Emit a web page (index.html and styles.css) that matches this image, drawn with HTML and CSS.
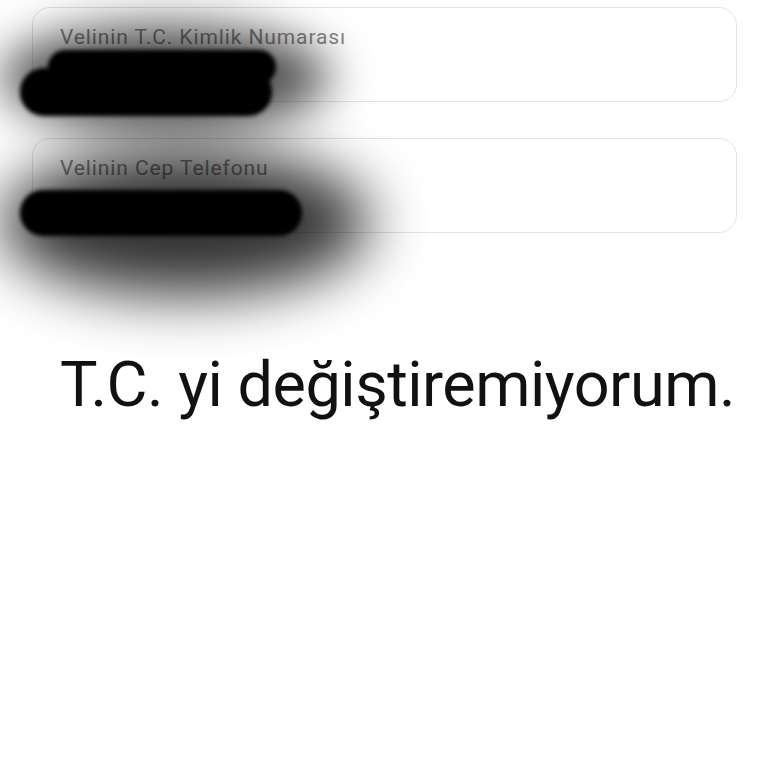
FILE: index.html
```html
<!DOCTYPE html>
<html lang="tr">
<head>
<meta charset="utf-8">
<link rel="stylesheet" href="styles.css">
</head>
<body>
<div class="page">
  <div class="form">
    <div class="field"><span class="label">Velinin T.C. Kimlik Numarası</span></div>
    <div class="field"><span class="label">Velinin Cep Telefonu</span></div>
  </div>
  <p class="message">T.C. yi değiştiremiyorum.</p>
  <div class="scribble s1-halo"></div>
  <div class="scribble s1-a"></div>
  <div class="scribble s1-b"></div>
  <div class="scribble s2-halo"></div>
  <div class="scribble s2-a"></div>
</div>
</body>
</html>
```

FILE: styles.css
```css
html, body {
  margin: 0;
  padding: 0;
  background: #ffffff;
}
.page {
  position: relative;
  width: 768px;
  height: 768px;
  overflow: hidden;
  font-family: Roboto, "Liberation Sans", sans-serif;
}
.form {
  display: flex;
  flex-direction: column;
  gap: 36px;
  padding: 7px 31px 0 32px;
}
.field {
  height: 95px;
  border: 1.5px solid #e4e4e4;
  border-radius: 18px;
  padding: 17px 0 0 27px;
  box-sizing: border-box;
}
.label {
  font-size: 21px;
  letter-spacing: 0.9px;
  color: #888888;
}
.message {
  margin: 120px 0 0 60px;
  font-size: 63px;
  letter-spacing: -0.5px;
  line-height: 1;
  color: #111;
  white-space: nowrap;
}
.scribble {
  position: absolute;
  background: #000;
}
.s1-halo {
  left: 0;
  top: 25px;
  width: 330px;
  height: 105px;
  border-radius: 50%;
  filter: blur(24px);
  opacity: 0.7;
}
.s1-a {
  left: 48px;
  top: 50px;
  width: 228px;
  height: 34px;
  border-radius: 17px;
  filter: blur(2px);
}
.s1-b {
  left: 20px;
  top: 68px;
  width: 252px;
  height: 48px;
  border-radius: 24px;
  filter: blur(2px);
}
.s2-halo {
  left: 0;
  top: 150px;
  width: 370px;
  height: 145px;
  border-radius: 50%;
  filter: blur(30px);
  opacity: 0.8;
}
.s2-a {
  left: 20px;
  top: 190px;
  width: 282px;
  height: 46px;
  border-radius: 23px;
  filter: blur(2px);
}
```
